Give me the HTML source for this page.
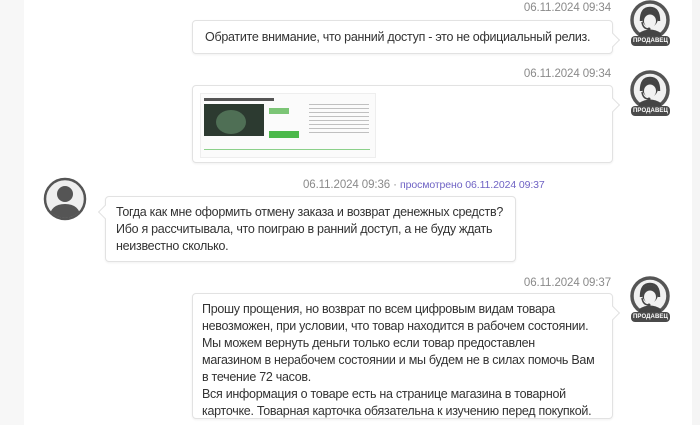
<!DOCTYPE html>
<html><head><meta charset="utf-8"><style>
body{margin:0;width:700px;height:425px;overflow:hidden;background:#fff;font-family:"Liberation Sans",Arial,sans-serif;position:relative}
.l{position:absolute;left:0;top:0;width:24px;height:425px;background:#f7f7f7}
.r{position:absolute;left:692px;top:0;width:8px;height:425px;background:#f5f5f5}
.t{position:absolute;font-size:11.5px;color:#8a8a8a;white-space:nowrap;letter-spacing:-.1px}
.b{position:absolute;border:1px solid #e2e2e2;border-radius:4px;background:#fff;box-shadow:0 1px 2px rgba(0,0,0,.06);font-size:12.5px;letter-spacing:-.28px;white-space:nowrap;color:#333;line-height:17px;box-sizing:border-box}
.b.s:after{content:"";position:absolute;right:-6px;top:14px;width:9px;height:9px;background:#fff;border-top:1px solid #e2e2e2;border-right:1px solid #e2e2e2;transform:rotate(45deg)}
.b.c:after{content:"";position:absolute;left:-6px;top:10px;width:9px;height:9px;background:#fff;border-bottom:1px solid #e2e2e2;border-left:1px solid #e2e2e2;transform:rotate(45deg)}
.av{position:absolute;width:44px;height:50px}
.bd{position:absolute;left:3px;top:36px;width:39px;height:10px;background:#4a4a4a;border-radius:4px;color:#fff;font-size:6px;font-weight:bold;text-align:center;line-height:10px;letter-spacing:.1px}
</style></head><body>
<div class="l"></div><div class="r"></div>

<div class="t" style="right:89px;top:2px">06.11.2024 09:34</div>
<div class="b s" style="left:192px;top:20px;width:421px;height:34px;padding:8px 12px">Обратите внимание, что ранний доступ - это не официальный релиз.</div>

<div class="t" style="right:89px;top:68px">06.11.2024 09:34</div>
<div class="b s" style="left:192px;top:85px;width:421px;height:78px">
<div style="position:absolute;left:7px;top:7px;width:174px;height:63px;background:#fbfbfb;border:1px solid #eee">
<div style="position:absolute;left:3px;top:4px;width:70px;height:3px;background:#555"></div>
<div style="position:absolute;left:3px;top:10px;width:60px;height:32px;background:#2c3a30"></div>
<div style="position:absolute;left:15px;top:16px;width:30px;height:24px;background:#4f6f55;border-radius:50%"></div>
<div style="position:absolute;left:68px;top:14px;width:20px;height:6px;background:#7cc576"></div>
<div style="position:absolute;left:68px;top:37px;width:30px;height:7px;background:#4cb94b"></div>
<div style="position:absolute;left:108px;top:10px;width:60px;height:30px;background:repeating-linear-gradient(#999 0 1px,transparent 1px 4px);opacity:.6"></div>
<div style="position:absolute;left:3px;top:55px;width:166px;height:1px;background:#8bd08a"></div>
</div></div>

<div class="t" style="left:303px;top:179px">06.11.2024 09:36 · <span style="color:#6f63c4;font-size:10.5px">просмотрено 06.11.2024 09:37</span></div>
<div class="b c" style="left:105px;top:196px;width:411px;height:66px;padding:7px 10px">Тогда как мне оформить отмену заказа и возврат денежных средств?<br>Ибо я рассчитывала, что поиграю в ранний доступ, а не буду ждать<br>неизвестно сколько.</div>

<div class="t" style="right:89px;top:277px">06.11.2024 09:37</div>
<div class="b s" style="left:192px;top:293px;width:421px;height:126px;padding:7px 9px">Прошу прощения, но возврат по всем цифровым видам товара<br>невозможен, при условии, что товар находится в рабочем состоянии.<br>Мы можем вернуть деньги только если товар предоставлен<br>магазином в нерабочем состоянии и мы будем не в силах помочь Вам<br>в течение 72 часов.<br>Вся информация о товаре есть на странице магазина в товарной<br>карточке. Товарная карточка обязательна к изучению перед покупкой.</div>

<svg width="0" height="0" style="position:absolute"><defs>
<g id="sa"><circle cx="22" cy="20" r="18" fill="#f1f1f1" stroke="#555" stroke-width="3.5"/>
<ellipse cx="22" cy="18" rx="8" ry="9" fill="#444"/><ellipse cx="22" cy="21" rx="6" ry="6.5" fill="#f1f1f1"/>
<path d="M11 33 Q22 26 33 33 L33 37 L11 37Z" fill="#444"/>
<path d="M13 21 Q13 8 22 8 Q31 8 31 21" fill="none" stroke="#444" stroke-width="2.5"/>
<path d="M14 22 Q15 29 21 29" fill="none" stroke="#444" stroke-width="1.5"/><circle cx="21" cy="29" r="1.5" fill="#444"/></g>
</defs></svg>
<div class="av" style="left:628px;top:0"><svg width="44" height="40"><use href="#sa"/></svg><div class="bd">ПРОДАВЕЦ</div></div>
<div class="av" style="left:628px;top:70px"><svg width="44" height="40"><use href="#sa"/></svg><div class="bd">ПРОДАВЕЦ</div></div>
<div class="av" style="left:628px;top:276px"><svg width="44" height="40"><use href="#sa"/></svg><div class="bd">ПРОДАВЕЦ</div></div>

<svg style="position:absolute;left:43px;top:177px" width="44" height="44"><defs><clipPath id="cc"><circle cx="22" cy="22" r="19"/></clipPath></defs>
<circle cx="22" cy="22" r="20" fill="#efefef" stroke="#555" stroke-width="2.5"/>
<g clip-path="url(#cc)" fill="#555"><circle cx="22" cy="17" r="8"/><path d="M6 44 Q6 27 22 27 Q38 27 38 44Z"/></g></svg>
</body></html>
